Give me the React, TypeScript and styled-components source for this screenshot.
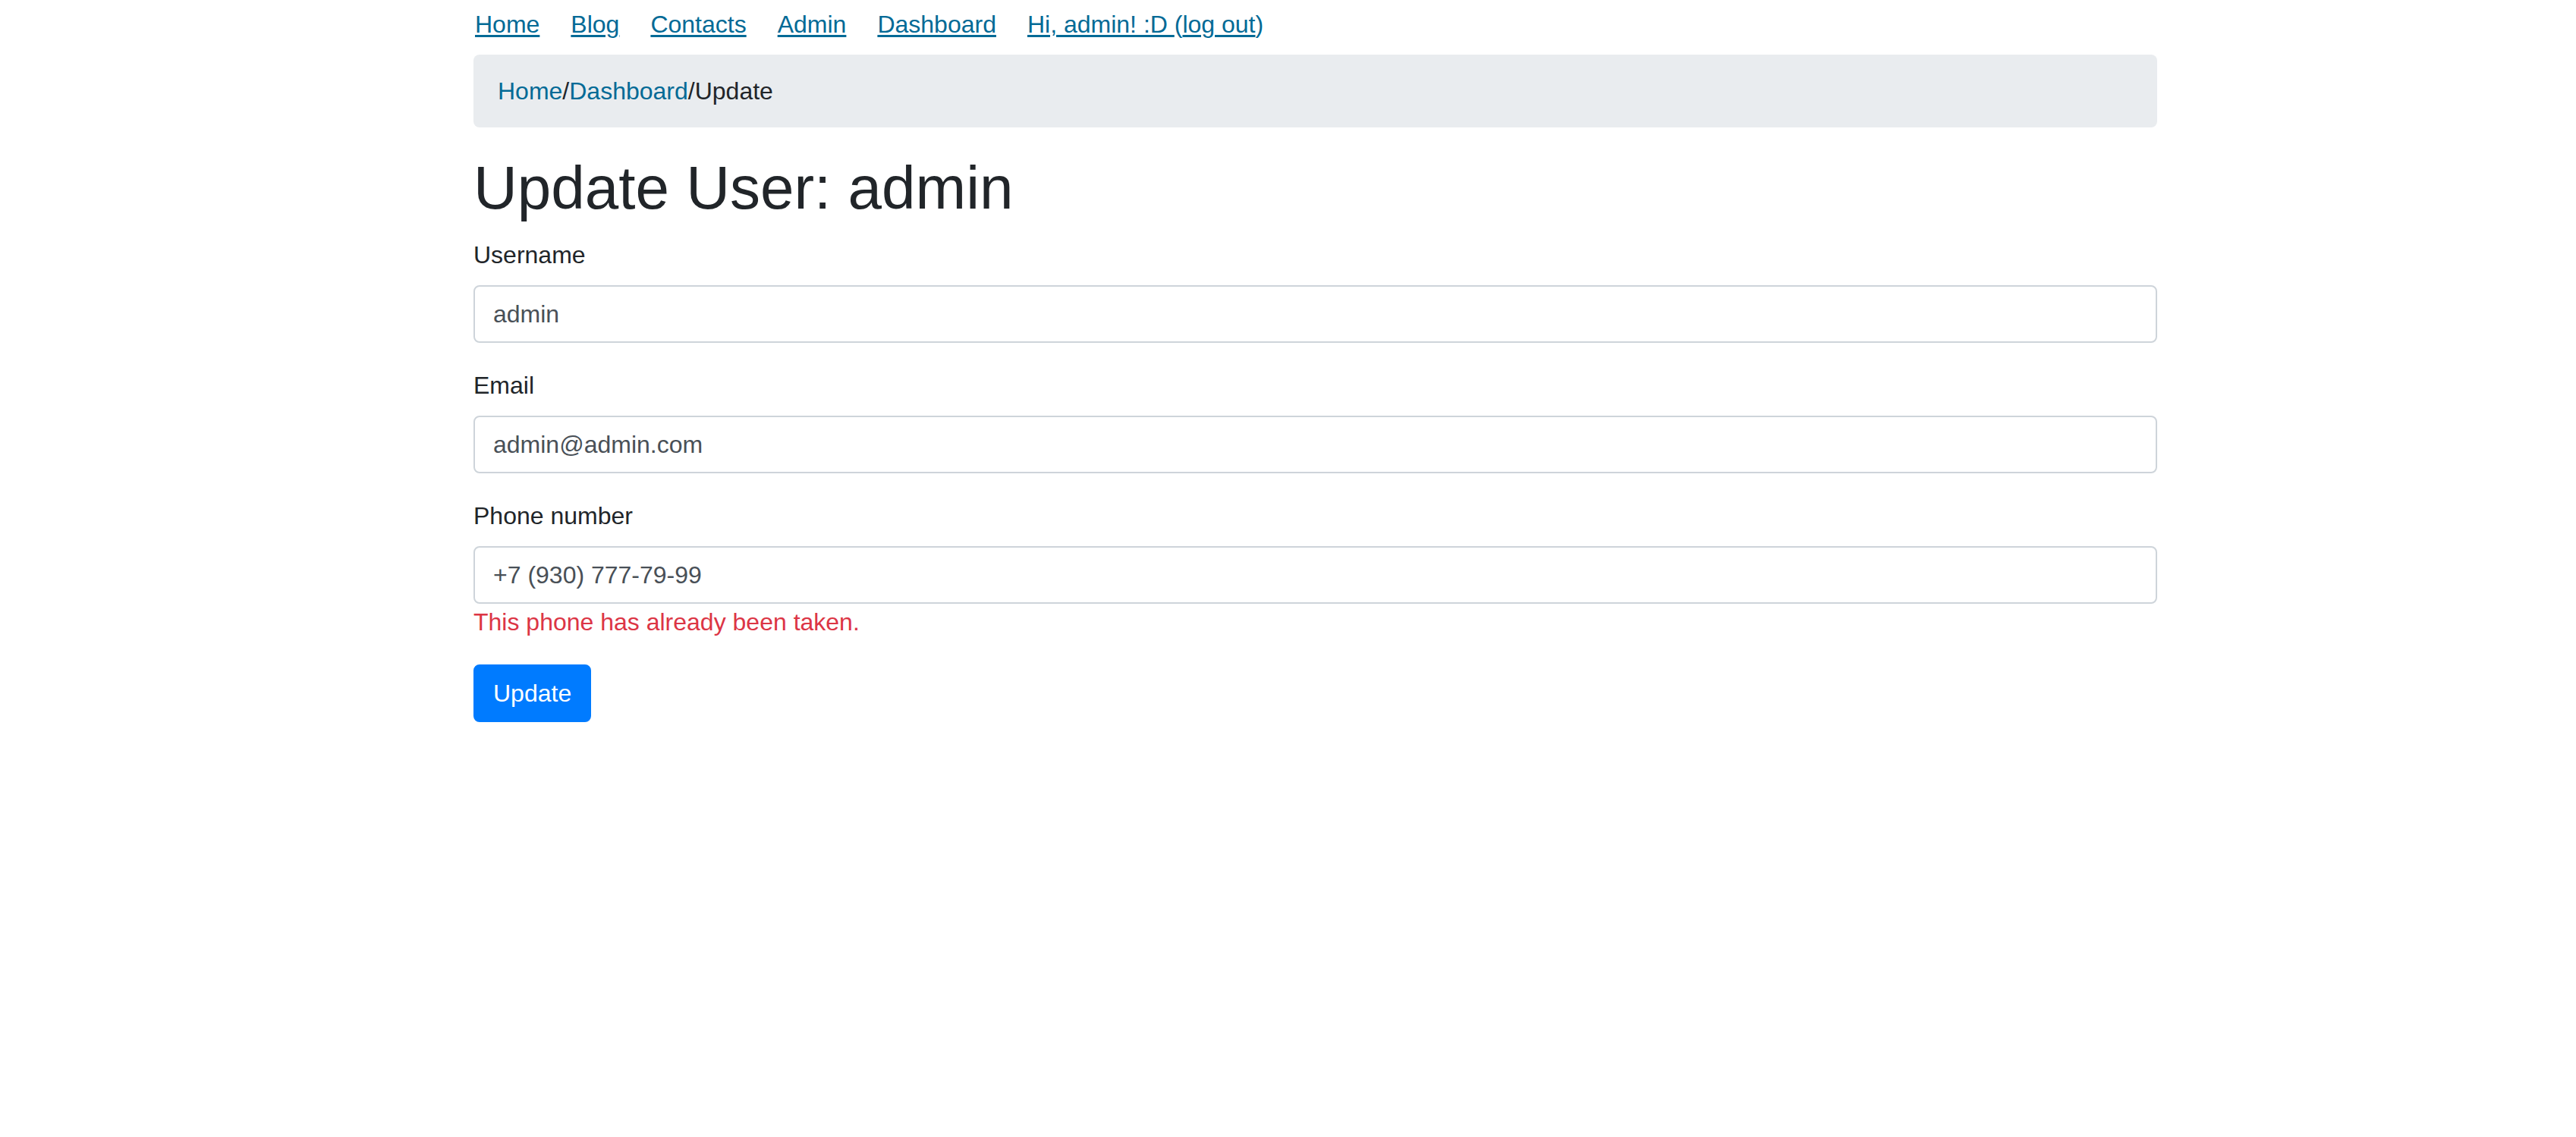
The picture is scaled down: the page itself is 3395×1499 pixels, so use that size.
import React from "react";
import styled, { createGlobalStyle } from "styled-components";

const GlobalStyle = createGlobalStyle`
  html, body {
    margin: 0;
    padding: 0;
    background: #ffffff;
  }
  body {
    font-family: "Liberation Sans", Arial, sans-serif;
    font-size: 32px;
    line-height: 1.5;
    color: #212529;
  }
  * { box-sizing: border-box; }
`;

const LINK = "#026a96";

const Page = styled.div`
  padding-top: 8px;
`;

const Container = styled.div`
  width: 2219px;
  margin-left: 624px;
`;

const Nav = styled.nav`
  display: flex;
  align-items: baseline;
  gap: 41px;
  height: 48px;
  margin-left: 2px;
`;

const NavLink = styled.a`
  color: ${LINK};
  text-decoration: underline;
  text-decoration-thickness: 3px;
  text-underline-offset: 3px;
  white-space: pre;
`;

const Paren = styled.span`
  color: ${LINK};
`;

const Greeting = styled.span`
  white-space: pre;
`;

const Breadcrumb = styled.ol`
  display: flex;
  list-style: none;
  margin: 16px 0 32px;
  padding: 24px 32px;
  background: #e9ecef;
  border-radius: 8px;
`;

const Crumb = styled.a`
  color: ${LINK};
  text-decoration: none;
`;

const Sep = styled.span`
  color: #212529;
`;

const Current = styled.span`
  color: #212529;
`;

const Title = styled.h1`
  margin: 0 0 16px;
  font-size: 80px;
  font-weight: 400;
  line-height: 1.2;
  color: #212529;
`;

const FormGroup = styled.div`
  margin-bottom: 32px;
`;

const Label = styled.label`
  display: block;
  margin-bottom: 16px;
  color: #212529;
`;

const Input = styled.input`
  display: block;
  width: 100%;
  height: 76px;
  padding: 12px 24px;
  font-family: inherit;
  font-size: 32px;
  line-height: 1.5;
  color: #495057;
  background: #fff;
  border: 2px solid #ced4da;
  border-radius: 8px;
  outline: none;
`;

const Feedback = styled.div`
  font-size: 32px;
  line-height: 1.5;
  color: #dc3545;
`;

const Button = styled.button`
  display: inline-block;
  padding: 12px 24px;
  font-family: inherit;
  font-size: 32px;
  line-height: 1.5;
  color: #fff;
  background: #007bff;
  border: 2px solid #007bff;
  border-radius: 8px;
`;

export default function App() {
  return (
    <>
      <GlobalStyle />
      <Page>
        <Container>
          <Nav>
            <NavLink href="#">Home</NavLink>
            <NavLink href="#">Blog</NavLink>
            <NavLink href="#">Contacts</NavLink>
            <NavLink href="#">Admin</NavLink>
            <NavLink href="#">Dashboard</NavLink>
            <Greeting>
              <NavLink href="#">{"Hi, admin! :D "}</NavLink>
              <Paren>(</Paren>
              <NavLink href="#">log out</NavLink>
              <Paren>)</Paren>
            </Greeting>
          </Nav>
          <Breadcrumb>
            <li>
              <Crumb href="#">Home</Crumb>
            </li>
            <Sep>/</Sep>
            <li>
              <Crumb href="#">Dashboard</Crumb>
            </li>
            <Sep>/</Sep>
            <li>
              <Current>Update</Current>
            </li>
          </Breadcrumb>
          <Title>Update User: admin</Title>
          <form onSubmit={(e) => e.preventDefault()}>
            <FormGroup>
              <Label htmlFor="username">Username</Label>
              <Input id="username" defaultValue="admin" />
            </FormGroup>
            <FormGroup>
              <Label htmlFor="email">Email</Label>
              <Input id="email" defaultValue="admin@admin.com" />
            </FormGroup>
            <FormGroup>
              <Label htmlFor="phone">Phone number</Label>
              <Input id="phone" defaultValue="+7 (930) 777-79-99" />
              <Feedback>This phone has already been taken.</Feedback>
            </FormGroup>
            <Button type="submit">Update</Button>
          </form>
        </Container>
      </Page>
    </>
  );
}
